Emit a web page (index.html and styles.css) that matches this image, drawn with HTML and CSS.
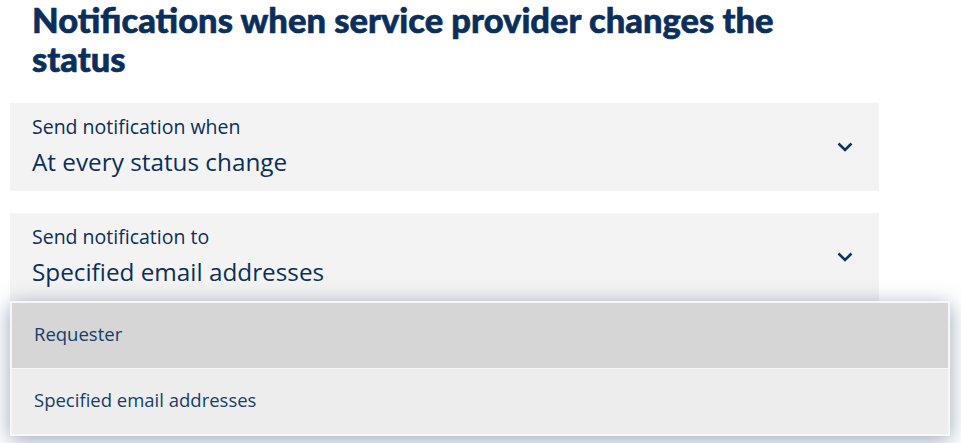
FILE: index.html
```html
<!DOCTYPE html>
<html lang="en">
<head>
    <meta charset="UTF-8">
    <meta name="viewport" content="width=device-width, initial-scale=1.0">
    <title>Notification settings</title>
    <link rel="stylesheet" href="styles.css">
</head>
<body>
    <div class="settings">
        <h1>Notifications when service provider changes the status</h1>

        <div class="field">
            <div class="field-text">
                <div class="field-label">Send notification when</div>
                <div class="field-value">At every status change</div>
            </div>
            <svg class="chevron" width="16" height="10" viewBox="0 0 16 10">
                <path d="M1.5 1.5 L8 8 L14.5 1.5" fill="none" stroke="#0b3566" stroke-width="2.6"/>
            </svg>
        </div>

        <div class="field field-open">
            <div class="field-text">
                <div class="field-label">Send notification to</div>
                <div class="field-value">Specified email addresses</div>
            </div>
            <svg class="chevron" width="16" height="10" viewBox="0 0 16 10">
                <path d="M1.5 1.5 L8 8 L14.5 1.5" fill="none" stroke="#0b3566" stroke-width="2.6"/>
            </svg>

            <div class="options">
                <div class="option option-hover">Requester</div>
                <div class="option">Specified email addresses</div>
            </div>
        </div>
    </div>
</body>
</html>
```

FILE: styles.css
```css
* {
    margin: 0;
    padding: 0;
    box-sizing: border-box;
}

html, body {
    min-height: 100vh;
}

body {
    background: #ffffff;
    color: #0b2f5c;
    font-family: "Open Sans", sans-serif;
}

.settings {
    width: 879px;
    padding: 0 0 0 10px;
}

h1 {
    font-family: "Lato", sans-serif;
    font-size: 34.5px;
    font-weight: 900;
    line-height: 39px;
    color: #0b2f5c;
    -webkit-text-stroke: 0.6px #0b2f5c;
    padding: 0 0 0 22px;
    margin-bottom: 25px;
    max-width: 800px;
}

.field {
    position: relative;
    display: flex;
    align-items: flex-start;
    justify-content: space-between;
    height: 88px;
    background: #f3f3f3;
    padding: 12px 26px 0 22px;
    margin-bottom: 22px;
}

.field-label {
    font-size: 19.5px;
    line-height: 24px;
    color: #0b2f5c;
}

.field-value {
    font-size: 24.3px;
    line-height: 30px;
    margin-top: 8px;
    color: #0b2f5c;
}

.chevron {
    display: block;
    align-self: center;
    margin-top: -12px;
}

.options {
    position: absolute;
    top: 88px;
    left: 0;
    width: 940px;
    border: 2px solid #f7f7f7;
    background: #ededed;
    box-shadow: 0 4px 20px rgba(30, 60, 100, 0.45);
    z-index: 10;
}

.option {
    height: 65px;
    display: flex;
    align-items: center;
    padding: 0 0 5px 22px;
    font-size: 18.5px;
    color: #173d6a;
}

.option-hover {
    background: #d6d6d6;
    border-bottom: 1px solid #f7f7f7;
    height: 66px;
}
```
